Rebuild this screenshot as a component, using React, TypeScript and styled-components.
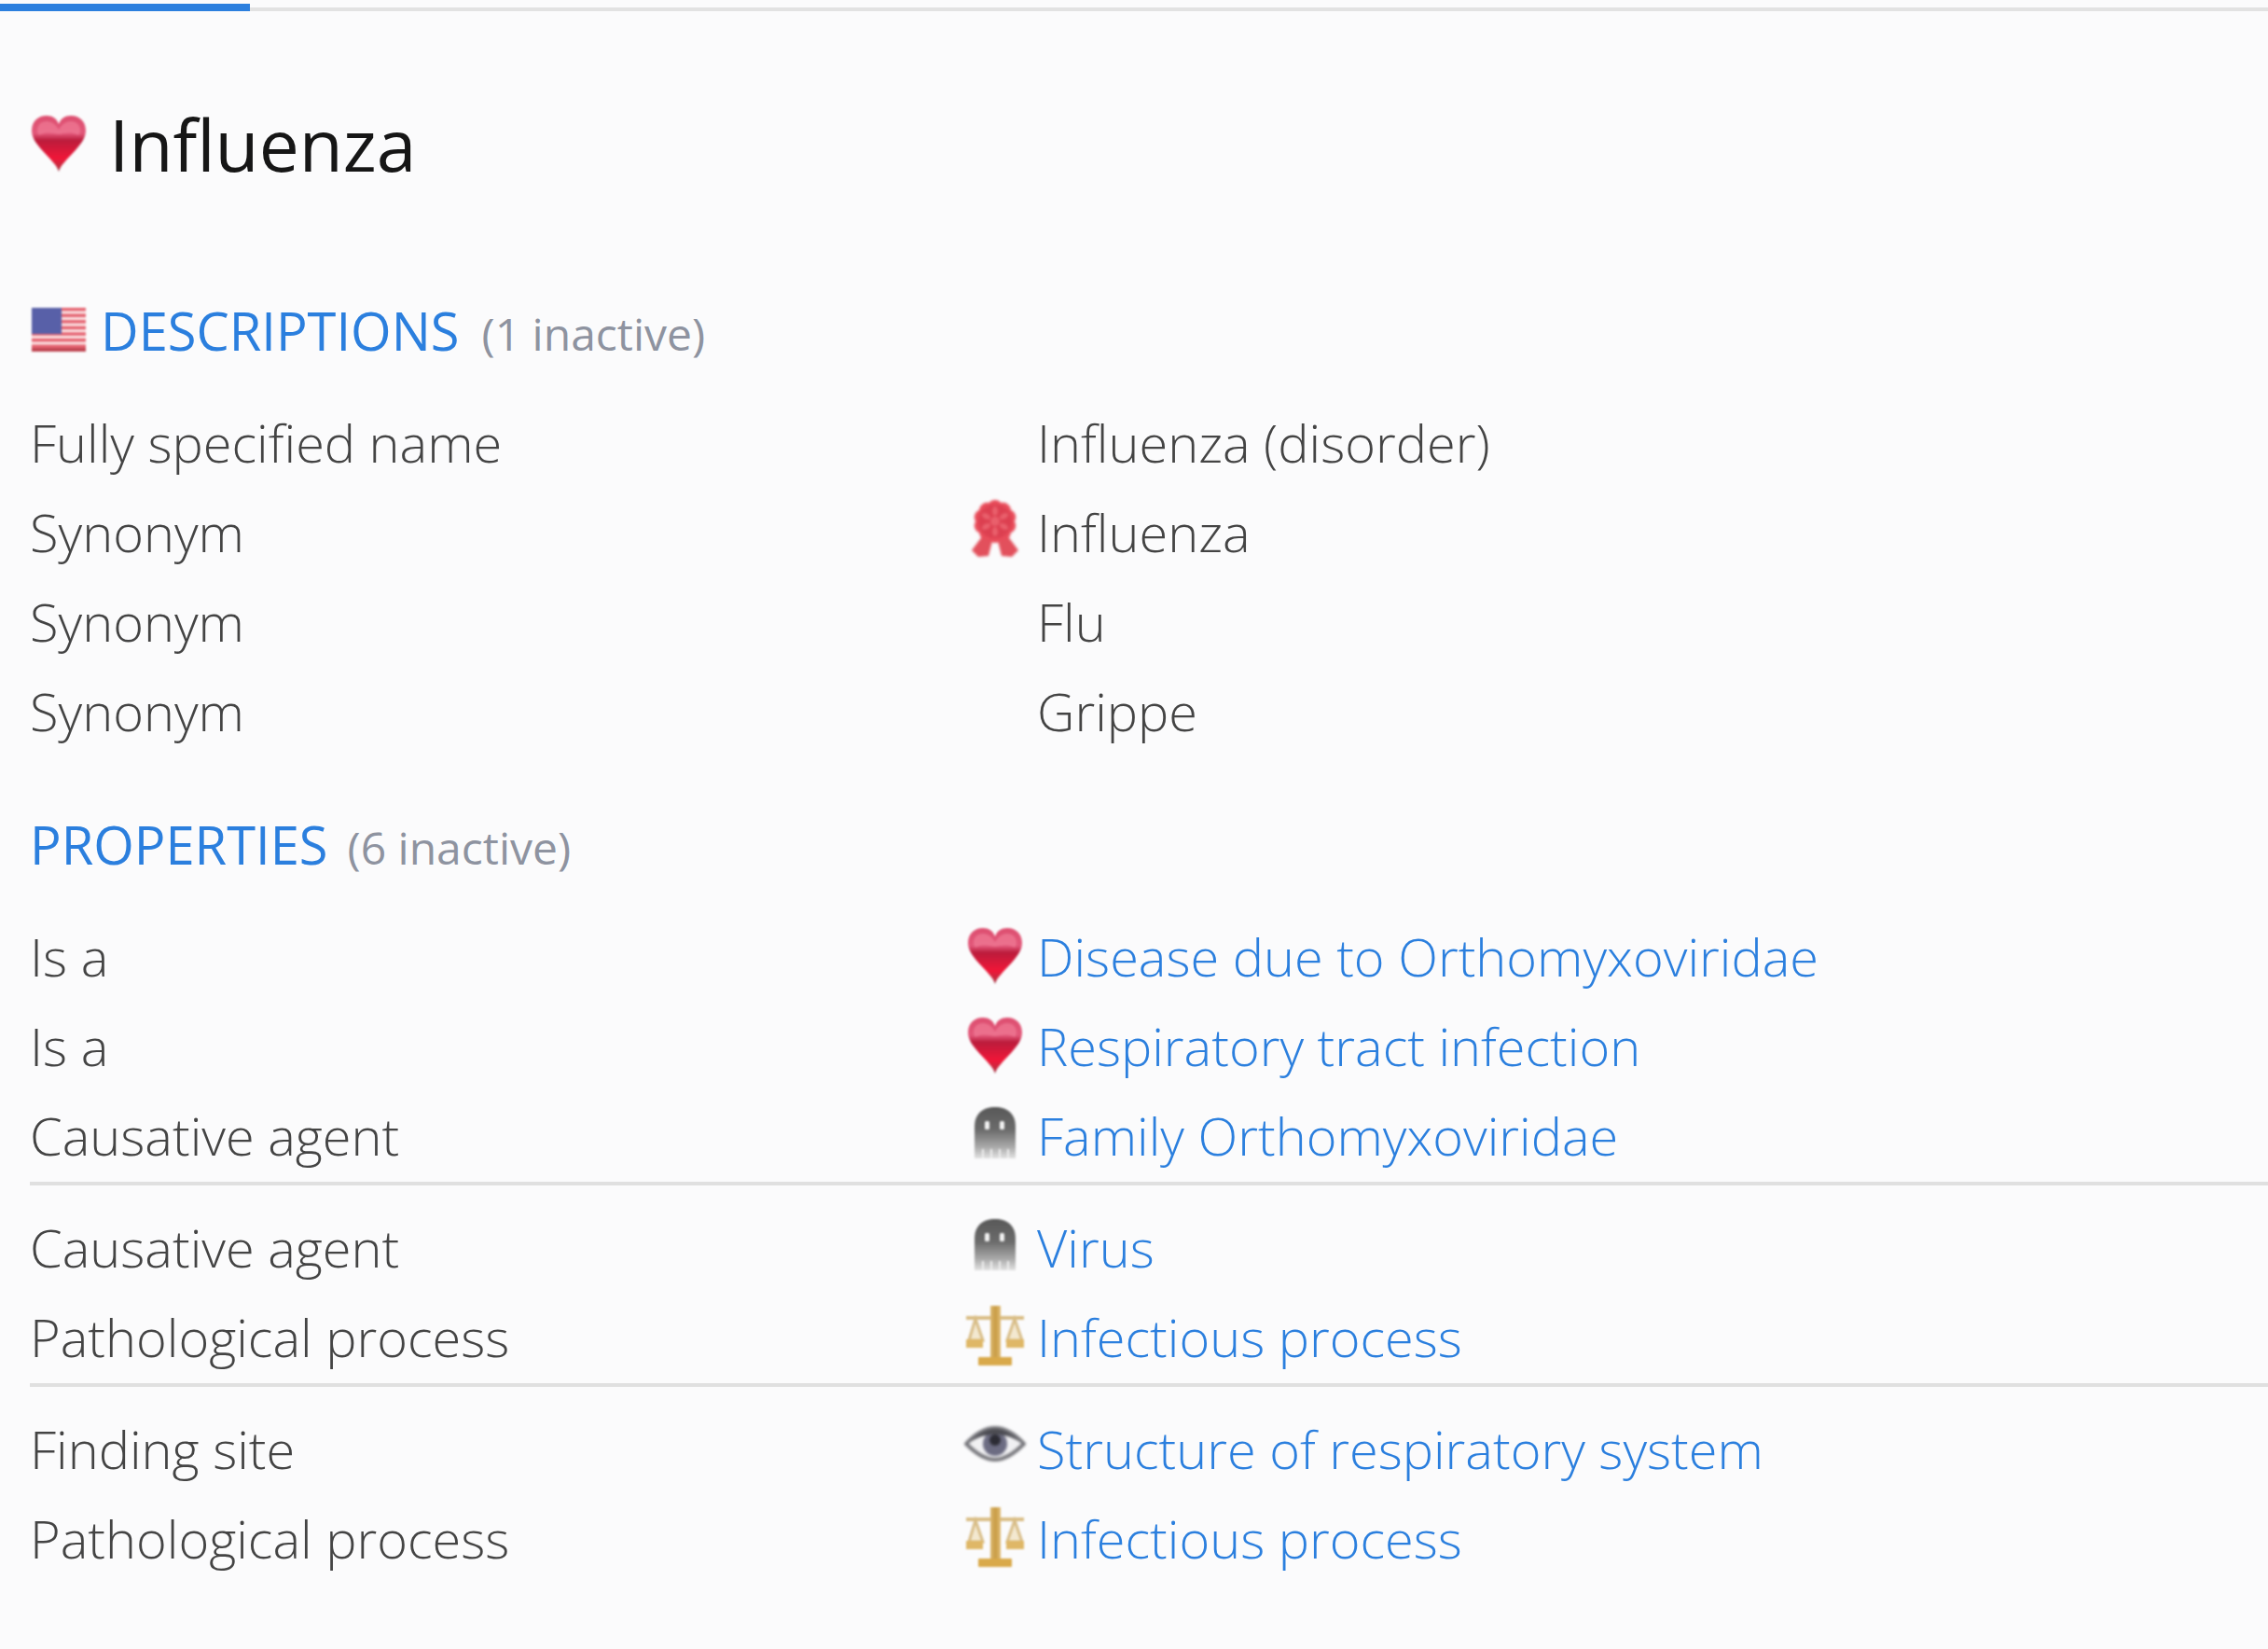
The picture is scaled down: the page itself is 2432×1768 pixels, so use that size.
import React from 'react'
import styled, { createGlobalStyle } from 'styled-components'

const GlobalStyle = createGlobalStyle`
  html, body { margin: 0; padding: 0; background: #fbfbfc; }
  body { font-family: "Open Sans", "Liberation Sans", sans-serif; }
`

const Page = styled.div`
  width: 2432px;
  height: 1768px;
  overflow: hidden;
  background: #fbfbfc;
`

const TabTrack = styled.div`
  margin-top: 4px;
  height: 8px;
  display: flex;
  align-items: flex-end;
`

const ActiveTab = styled.div`
  width: 268px;
  height: 8px;
  background: #2b7fde;
`

const TabRest = styled.div`
  flex: 1;
  height: 4px;
  background: #e2e2e2;
`

const Content = styled.div`
  padding: 92px 0 0 32px;
`

const Title = styled.h1`
  display: flex;
  align-items: center;
  gap: 25px;
  margin: 0 0 112px 2px;
  font-size: 76.7px;
  line-height: 100px;
  font-weight: 400;
  color: #161616;
`

const SectionHeader = styled.h2`
  display: flex;
  align-items: baseline;
  margin: 0 0 34px;
  height: 76px;
  line-height: 76px;
  font-size: 56px;
  font-weight: 400;
  color: #2b7fde;
`

const Inactive = styled.span<{ $gap: number }>`
  margin-left: ${p => p.$gap}px;
  font-size: 48px;
  color: #8e93a0;
`

const Row = styled.div`
  display: grid;
  grid-template-columns: 990px 90px 1fr;
  align-items: center;
  height: 96px;
  font-size: 55.9px;
  line-height: 96px;
  font-weight: 300;
  color: #444;
`

const IconCell = styled.div<{ $lift?: number }>`
  display: flex;
  justify-content: center;
  align-items: center;
  padding-bottom: ${p => p.$lift ?? 0}px;
`

const Concept = styled.a`
  color: #2b7fde;
  text-decoration: none;
`

const Rule = styled.hr`
  height: 4px;
  margin: 2px 0 18px;
  border: 0;
  background: #e0e0e0;
`

const FlagSlot = styled.span`
  display: inline-flex;
  margin: 0 16px 0 2px;
  padding-bottom: 2px;
  align-self: center;
`

const PropertySection = styled.section`
  margin-top: 57px;
`

const Glyph = styled.svg<{ $blur?: number }>`
  display: block;
  filter: blur(${p => p.$blur ?? 1.2}px);
`

const Heart = ({ id }: { id: string }) => (
  <Glyph width="58" height="60" viewBox="0 0 58 60" $blur={1.1}>
    <defs>
      <linearGradient id={id} x1="0" y1="0" x2="0" y2="1">
        <stop offset="0" stopColor="#dd4f70" />
        <stop offset="0.32" stopColor="#e2587a" />
        <stop offset="0.44" stopColor="#bb1c3c" />
        <stop offset="0.76" stopColor="#f01638" />
        <stop offset="0.9" stopColor="#c82a40" />
        <stop offset="1" stopColor="#a04550" />
      </linearGradient>
    </defs>
    <path
      d="M29 60 C27 53 20 47 11 37 C4 29 0 23 0 16 C0 6 7 0 16 0 C22 0 27 3 29 9 C31 3 36 0 42 0 C51 0 58 6 58 16 C58 23 54 29 47 37 C38 47 31 53 29 60 Z"
      fill={`url(#${id})`}
    />
    <path
      d="M6 16 C6 10 10 6 16 6 C22 6 26 10 29 15 C32 10 36 6 42 6 C48 6 52 10 52 16 C52 18 51 20 50 21 C42 17 36 19 29 20 C22 19 16 17 8 21 C7 20 6 18 6 16 Z"
      fill="#f58aa2"
      opacity="0.5"
    />
  </Glyph>
)

const Rosette = () => (
  <Glyph width="52" height="62" viewBox="0 0 52 62" $blur={1.4}>
    <path d="M13 38 L1 54 L8 61 L19 60 L23 44 Z" fill="#e2505c" />
    <path d="M39 38 L51 54 L44 61 L33 60 L29 44 Z" fill="#e2505c" />
    {[0, 36, 72, 108, 144, 180, 216, 252, 288, 324].map(a => (
      <ellipse key={a} cx="26" cy="8" rx="8" ry="8" fill="#e84c5a" transform={`rotate(${a} 26 23)`} />
    ))}
    <circle cx="26" cy="23" r="18" fill="#dc3f50" />
    {[0, 60, 120, 180, 240, 300].map(a => (
      <ellipse key={a} cx="26" cy="12" rx="3" ry="5" fill="#e9606c" transform={`rotate(${a} 26 23)`} />
    ))}
    <circle cx="26" cy="23" r="5" fill="#e9606c" />
  </Glyph>
)

const Ghost = ({ id }: { id: string }) => (
  <Glyph width="46" height="56" viewBox="0 0 46 56">
    <defs>
      <linearGradient id={id} x1="0" y1="0" x2="0" y2="1">
        <stop offset="0" stopColor="#585858" />
        <stop offset="0.45" stopColor="#6c6c6c" />
        <stop offset="0.78" stopColor="#aaaaaa" />
        <stop offset="1" stopColor="#e2e2e2" />
      </linearGradient>
    </defs>
    <path d="M1 56 V22 C1 8 10 1 23 1 C36 1 45 8 45 22 V56 Z" fill={`url(#${id})`} />
    <rect x="12" y="16" width="5" height="9" rx="1.5" fill="#f2f2f2" />
    <rect x="28" y="16" width="5" height="9" rx="1.5" fill="#f2f2f2" />
    {[9, 18, 27, 36].map(x => (
      <rect key={x} x={x} y="46" width="2" height="10" fill="#eeeeee" />
    ))}
  </Glyph>
)

const Scales = ({ id }: { id: string }) => (
  <Glyph width="62" height="64" viewBox="0 0 62 64" $blur={1.3}>
    <defs>
      <linearGradient id={id} x1="0" y1="0" x2="1" y2="0">
        <stop offset="0" stopColor="#dcb871" />
        <stop offset="0.5" stopColor="#c99c45" />
        <stop offset="1" stopColor="#e0bd76" />
      </linearGradient>
    </defs>
    <path d="M10 14 L3 37 H18 Z M52 14 L44 37 H60 Z" fill="#f3e8d0" stroke="#d8bd88" strokeWidth="3" />
    <rect x="0" y="11" width="62" height="4" fill="#d9bd85" />
    <rect x="26" y="0" width="11" height="56" fill={`url(#${id})`} />
    <rect x="13" y="55" width="36" height="9" rx="1" fill="#d9a94a" />
    <rect x="0" y="36" width="18" height="9" fill="#dfb767" />
    <rect x="43" y="36" width="19" height="9" fill="#dfb767" />
  </Glyph>
)

const Eye = () => (
  <Glyph width="66" height="38" viewBox="0 0 66 38" $blur={1.6}>
    <path d="M2 19 C14 6 24 2 33 2 C42 2 52 6 64 19 C52 31 42 36 33 36 C24 36 14 31 2 19 Z" fill="#f0f0f2" stroke="#77777c" strokeWidth="4" />
    <circle cx="33" cy="19" r="13" fill="#6c6c82" />
    <circle cx="33" cy="15" r="6" fill="#2c2c34" />
    <path d="M6 17 C16 7 25 3 33 3 C41 3 50 7 60 17 C50 11 42 9 33 9 C24 9 16 11 6 17 Z" fill="#4c4c52" />
  </Glyph>
)

const Flag = () => (
  <Glyph width="58" height="47" viewBox="0 0 58 47" $blur={1.1}>
    <rect width="58" height="47" fill="#fbdfe0" />
    {[0, 1, 2, 3, 4, 5, 6].map(i => (
      <rect key={i} y={i * 6.6} width="58" height="3.3" fill="#e4606e" />
    ))}
    <rect width="32" height="28" fill="#5860a8" />
    <rect y="43" width="58" height="4" fill="#c04552" />
  </Glyph>
)

type RowData = { label: string; value: string; icon?: React.ReactNode; lift?: number; link?: boolean }

const descriptions: RowData[] = [
  { label: 'Fully specified name', value: 'Influenza (disorder)' },
  { label: 'Synonym', value: 'Influenza', icon: <Rosette />, lift: 6 },
  { label: 'Synonym', value: 'Flu' },
  { label: 'Synonym', value: 'Grippe' },
]

const propertyGroups: RowData[][] = [
  [
    { label: 'Is a', value: 'Disease due to Orthomyxoviridae', icon: <Heart id="h1" />, link: true },
    { label: 'Is a', value: 'Respiratory tract infection', icon: <Heart id="h2" />, link: true },
    { label: 'Causative agent', value: 'Family Orthomyxoviridae', icon: <Ghost id="g1" />, lift: 6, link: true },
  ],
  [
    { label: 'Causative agent', value: 'Virus', icon: <Ghost id="g2" />, lift: 6, link: true },
    { label: 'Pathological process', value: 'Infectious process', icon: <Scales id="s1" />, lift: 2, link: true },
  ],
  [
    { label: 'Finding site', value: 'Structure of respiratory system', icon: <Eye />, lift: 10, link: true },
    { label: 'Pathological process', value: 'Infectious process', icon: <Scales id="s2" />, lift: 2, link: true },
  ],
]

const ConceptRow = ({ row }: { row: RowData }) => (
  <Row>
    <div>{row.label}</div>
    <IconCell $lift={row.lift}>{row.icon}</IconCell>
    <div>{row.link ? <Concept href="#">{row.value}</Concept> : row.value}</div>
  </Row>
)

export default function App() {
  return (
    <Page>
      <GlobalStyle />
      <TabTrack>
        <ActiveTab />
        <TabRest />
      </TabTrack>
      <Content>
        <Title>
          <Heart id="title-heart" />
          Influenza
        </Title>
        <SectionHeader>
          <FlagSlot><Flag /></FlagSlot>
          DESCRIPTIONS
          <Inactive $gap={24}>(1 inactive)</Inactive>
        </SectionHeader>
        {descriptions.map((r, i) => <ConceptRow key={i} row={r} />)}
        <PropertySection>
          <SectionHeader>
            PROPERTIES
            <Inactive $gap={21}>(6 inactive)</Inactive>
          </SectionHeader>
          {propertyGroups.map((group, i) => (
            <div key={i}>
              {group.map((r, j) => <ConceptRow key={j} row={r} />)}
              {i < propertyGroups.length - 1 && <Rule />}
            </div>
          ))}
        </PropertySection>
      </Content>
    </Page>
  )
}
